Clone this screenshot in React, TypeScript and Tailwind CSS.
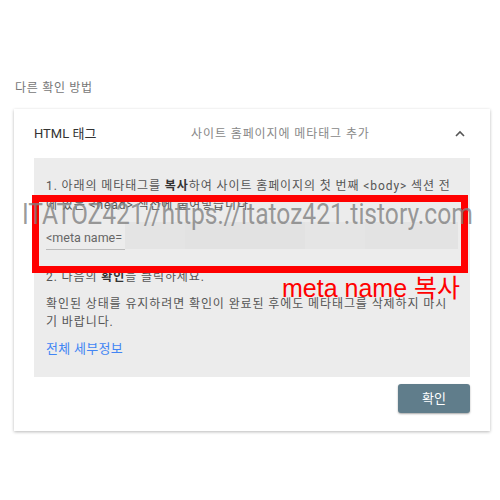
import React from "react";

const font = { fontFamily: 'Roboto, "Noto Sans CJK KR", sans-serif' };

export default function App() {
  return (
    <div className="relative w-[500px] h-[500px] bg-white overflow-hidden" style={font}>
      <div className="pt-[79px] px-[14px]">
        <div className="text-[12px] leading-[18px] text-[#777] pl-[1px] tracking-[0.7px]">다른 확인 방법</div>
        <div className="mt-[12px] w-[476px] bg-white shadow-[0_1px_3px_rgba(0,0,0,0.28)] px-[20px] pb-[18px]">
          <div className="h-[49px] flex items-center">
            <div className="w-[157px] text-[13px] text-[#333]">HTML 태그</div>
            <div className="flex-1 text-[12px] text-[#888] tracking-[0.9px]">사이트 홈페이지에 메타태그 추가</div>
            <svg width="12" height="12" viewBox="0 0 12 12" className="mr-[4px]">
              <path d="M2 8 L6 4 L10 8" fill="none" stroke="#555" strokeWidth="1.6" />
            </svg>
          </div>
          <div className="bg-[#ececec] h-[219px] pl-[12px] pr-[4px] pt-[19px] text-[12px] leading-[19px] text-[#555] tracking-[0.9px] whitespace-nowrap">
            <div>
              1. 아래의 메타태그를 <b className="font-bold text-[#333]">복사</b>하여 사이트 홈페이지의 첫 번째 &lt;body&gt; 섹션 전
              <br />
              에 있는 &lt;head&gt; 섹션에 붙여넣습니다.
            </div>
            <div className="mt-[7px] flex h-[28px] items-end tracking-normal">
              <div className="w-[79px] h-[28px] border-b border-[#bbb] flex items-end pb-[3px] text-[12.5px] text-[#666] leading-[16px] whitespace-nowrap">
                &lt;meta name=
              </div>
              <div className="w-[333px] h-[27px] self-start flex">
                <div className="w-[60px] bg-[#e4e4e4]" />
                <div className="w-[120px] bg-[#e2e2e2]" />
                <div className="w-[60px] bg-[#e5e5e5]" />
                <div className="flex-1 bg-[#e3e3e3]" />
              </div>
            </div>
            <div className="mt-[18px]">
              2. 다음의 <b className="font-bold text-[#333]">확인</b>을 클릭하세요.
            </div>
            <div className="mt-[8px] leading-[18px]">
              확인된 상태를 유지하려면 확인이 완료된 후에도 메타태그를 삭제하지 마시
              <br />
              기 바랍니다.
            </div>
            <div className="mt-[8px] text-[13px] text-[#4285f4] tracking-[0.3px]">전체 세부정보</div>
          </div>
          <div className="flex justify-end mt-[7px]">
            <div className="w-[72px] h-[29px] rounded-[3px] bg-[#607d8b] text-white text-[13px] flex items-center justify-center shadow-[0_1px_2px_rgba(0,0,0,0.35)]">
              확인
            </div>
          </div>
        </div>
      </div>

      {/* annotation overlays */}
      <div className="absolute left-[32px] top-[195px] w-[436px] h-[78px] border-[7px] border-[#ff0000]" />
      <div
        className="absolute left-[22px] top-[195px] text-[30px] leading-[38px] text-[rgba(128,128,128,0.8)] whitespace-nowrap origin-left scale-x-[0.82]"
        style={{ fontFamily: 'Roboto, sans-serif' }}
      >
        ITATOZ421//https://itatoz421.tistory.com
      </div>
      <div
        className="absolute left-[282px] top-[275px] text-[25px] leading-[26px] text-[#ff0000] whitespace-nowrap"
        style={{ fontFamily: '"Liberation Sans", "Noto Sans CJK KR", sans-serif' }}
      >
        meta name 복사
      </div>
    </div>
  );
}
